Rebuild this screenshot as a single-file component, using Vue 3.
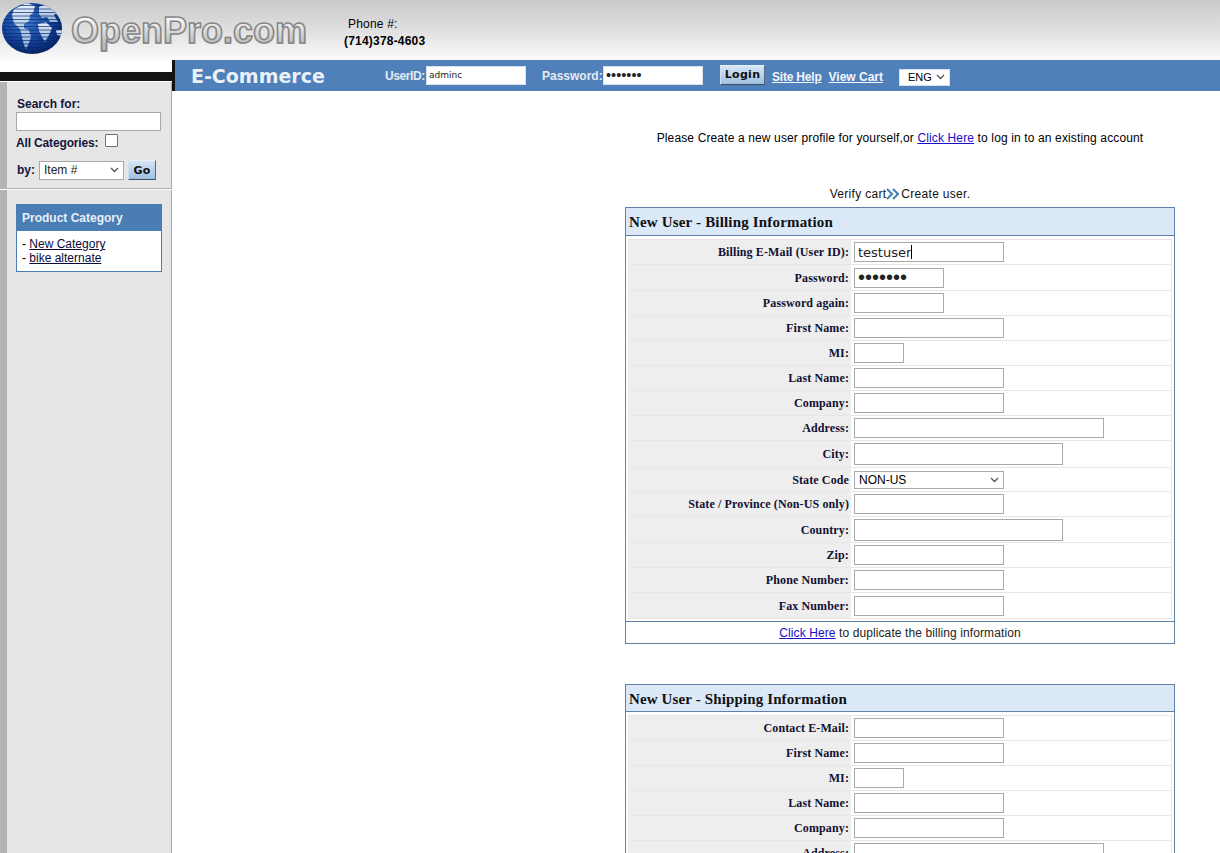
<script setup>
const billing = [
  { label: 'Billing E-Mail (User ID):', h: 25, w: 150, ih: 20, value: 'testuser', caret: true },
  { label: 'Password:', h: 26, w: 90, ih: 20, type: 'password', value: '1234567' },
  { label: 'Password again:', h: 25, w: 90, ih: 20, type: 'password' },
  { label: 'First Name:', h: 25, w: 150, ih: 20 },
  { label: 'MI:', h: 25, w: 50, ih: 20 },
  { label: 'Last Name:', h: 25, w: 150, ih: 20 },
  { label: 'Company:', h: 25, w: 150, ih: 20 },
  { label: 'Address:', h: 25, w: 250, ih: 20 },
  { label: 'City:', h: 27, w: 209, ih: 22 },
  { label: 'State Code', h: 24, select: true },
  { label: 'State / Province (Non-US only)', h: 25, w: 150, ih: 20 },
  { label: 'Country:', h: 26, w: 209, ih: 22 },
  { label: 'Zip:', h: 25, w: 150, ih: 20 },
  { label: 'Phone Number:', h: 25, w: 150, ih: 20 },
  { label: 'Fax Number:', h: 26, w: 150, ih: 20 }
]
const shipping = [
  { label: 'Contact E-Mail:', h: 25, w: 150, ih: 20 },
  { label: 'First Name:', h: 25, w: 150, ih: 20 },
  { label: 'MI:', h: 25, w: 50, ih: 20 },
  { label: 'Last Name:', h: 25, w: 150, ih: 20 },
  { label: 'Company:', h: 25, w: 150, ih: 20 },
  { label: 'Address:', h: 25, w: 250, ih: 20 }
]
const tables = [
  { title: 'New User - Billing Information', rows: billing, foot: true },
  { title: 'New User - Shipping Information', rows: shipping, foot: false }
]
</script>

<template>
  <div class="page">
    <header class="top">
      <div class="logo">
        <svg class="globe" width="66" height="58" viewBox="0 0 66 58">
          <defs>
            <radialGradient id="sea" cx="40%" cy="35%" r="70%">
              <stop offset="0" stop-color="#3f7fd0" />
              <stop offset="0.6" stop-color="#123f95" />
              <stop offset="1" stop-color="#071f5c" />
            </radialGradient>
            <linearGradient id="land" x1="0" y1="0" x2="0" y2="1">
              <stop offset="0" stop-color="#e8f1fa" />
              <stop offset="1" stop-color="#8fb2d8" />
            </linearGradient>
            <clipPath id="ball"><ellipse cx="32" cy="28.500" rx="30" ry="25.500" /></clipPath>
          </defs>
          <ellipse cx="32" cy="28.500" rx="30" ry="25.500" fill="url(#sea)" />
          <g clip-path="url(#ball)">
            <path fill="url(#land)" d="M14 9 L27 3 L35 6 L33 13 L30 15 L29 21 L24 24 L24 28 L29 30 L31 37 L29 43 L26 49 L24 45 L22 37 L20 29 L14 23 L12 15 Z" />
            <path fill="url(#land)" d="M39 7 L48 3 L59 11 L54 15 L58 22 L50 22 L47 17 L42 18 L39 14 Z" />
            <path fill="url(#land)" d="M38 24 L46 22 L52 28 L49 35 L45 42 L42 37 L39 31 Z" />
            <path fill="url(#land)" d="M56 30 L62 30 L62 36 L57 35 Z" />
            <path stroke="#0b2a70" stroke-width="1" opacity="0.7" d="M0 5.500H66M0 9H66M0 12.500H66M0 16H66M0 19.500H66M0 23H66M0 26.500H66M0 30H66M0 33.500H66M0 37H66M0 40.500H66M0 44H66M0 47.500H66M0 51H66" />
          </g>
        </svg>
        <span class="logo-text">OpenPro.com</span>
      </div>
      <div class="phone">
        <span class="phone-label">Phone #:</span>
        <strong>(714)378-4603</strong>
      </div>
    </header>

    <div class="shell">
      <aside class="side">
        <div class="blackbar"></div>
        <div class="search">
          <label class="search-title">Search for:</label>
          <input class="search-input" type="text" />
          <div class="cats">
            <span class="cats-label">All Categories:</span>
            <input class="check" type="checkbox" />
          </div>
          <div class="by">
            <span>by:</span>
            <select class="by-select chev"><option>Item #</option></select>
            <button class="btn go" type="button">Go</button>
          </div>
        </div>
        <div class="side-lower">
          <section class="catbox">
            <h3>Product Category</h3>
            <div class="catlist">
              <div>- <a href="#">New Category</a></div>
              <div>- <a href="#">bike alternate</a></div>
            </div>
          </section>
        </div>
      </aside>

      <div class="content">
        <nav class="nav">
          <span class="brand">E-Commerce</span>
          <label class="nav-label user">UserID:</label>
          <input class="nav-input" type="text" value="adminc" />
          <label class="nav-label pass">Password:</label>
          <input class="nav-input nav-secret" type="password" value="1234567" />
          <button class="btn login" type="button">Login</button>
          <a class="nav-link help" href="#">Site Help</a>
          <a class="nav-link cart" href="#">View Cart</a>
          <select class="lang chev"><option>ENG</option></select>
        </nav>

        <main class="main">
          <p class="intro">Please Create a new user profile for yourself,or <a href="#">Click Here</a> to log in to an existing account</p>
          <p class="steps">
            Verify cart<svg width="15" height="12" viewBox="0 0 15 12"><path d="M1 1l5 5-5 5M7 1l5 5-5 5" fill="none" stroke="#3d7fb0" stroke-width="2" /></svg>Create user.
          </p>

          <section v-for="t in tables" :key="t.title" class="panel">
            <h2 class="panel-title">{{ t.title }}</h2>
            <div class="rows">
              <div v-for="r in t.rows" :key="r.label" class="row" :style="{ height: r.h + 'px' }">
                <div class="label">{{ r.label }}</div>
                <div class="field">
                  <select v-if="r.select" class="state chev"><option>NON-US</option></select>
                  <span v-else class="wrap">
                    <input
                      class="text"
                      :class="{ secret: r.type === 'password' }"
                      :type="r.type || 'text'"
                      :value="r.value"
                      :style="{ width: r.w + 'px', height: r.ih + 'px' }"
                    />
                    <i v-if="r.caret" class="caret"></i>
                  </span>
                </div>
              </div>
            </div>
            <div v-if="t.foot" class="foot"><a href="#">Click Here</a> to duplicate the billing information</div>
          </section>
        </main>
      </div>
    </div>
  </div>
</template>

<style scoped>
.page {
  width: 1220px;
  height: 853px;
  overflow: hidden;
  background: #fff;
  font-family: "Liberation Sans", Arial, sans-serif;
  font-size: 12px;
  color: #000;
}
.top {
  height: 60px;
  display: flex;
  background: linear-gradient(#c9c9c9, #e2e2e2 55%, #fbfbfb);
}
.logo {
  width: 344px;
  display: flex;
  align-items: flex-start;
}
.globe { flex: none; }
.logo-text {
  margin: 8px 0 0 5px;
  font-size: 36px;
  font-weight: bold;
  line-height: 46px;
  background: linear-gradient(#f6f6f6 25%, #b8b8b8 80%);
  -webkit-background-clip: text;
  background-clip: text;
  -webkit-text-fill-color: transparent;
  -webkit-text-stroke: 1.500px #858585;
}
.phone {
  padding-top: 16px;
  display: flex;
  flex-direction: column;
  line-height: 17px;
  letter-spacing: 0.2px;
}
.phone-label { padding-left: 4px; }
.shell {
  display: flex;
  height: 793px;
}
.side {
  width: 172px;
  flex: none;
  padding-top: 12px;
  display: flex;
  flex-direction: column;
}
.blackbar {
  height: 9px;
  background: #141414;
  margin-bottom: 1px;
}
.search {
  height: 107px;
  box-sizing: border-box;
  padding: 15px 10px 0 9px;
  background: #e6e6e6;
  border-left: 7px solid #b4b4b4;
  border-right: 1px solid #aaa;
  border-bottom: 1px solid #b0b0b0;
  color: #15153f;
  font-weight: bold;
}
.search-title {
  display: block;
  margin-left: 1px;
  line-height: 14px;
}
.search-input {
  display: block;
  box-sizing: border-box;
  width: 145px;
  height: 19px;
  margin: 1px 0 0;
  border: 1px solid #a8a8a8;
  background: #fff;
  padding: 0;
}
.cats {
  display: flex;
  align-items: center;
  height: 16px;
  margin-top: 4px;
}
.cats-label { letter-spacing: -0.15px; }
.check {
  appearance: none;
  width: 13px;
  height: 13px;
  margin: -5px 0 0 7px;
  background: #fff;
  border: 1px solid #707070;
  border-radius: 1px;
  box-sizing: border-box;
}
.by {
  display: flex;
  align-items: center;
  margin: 9px 0 0 1px;
}
.chev {
  appearance: none;
  background: #fff url("data:image/svg+xml,%3Csvg xmlns='http://www.w3.org/2000/svg' width='9' height='6'%3E%3Cpath d='M1 1l3.500 3.500L8 1' fill='none' stroke='%23555' stroke-width='1.300'/%3E%3C/svg%3E") no-repeat right 4px center;
  border-radius: 0;
}
.by-select {
  box-sizing: border-box;
  width: 85px;
  height: 19px;
  margin-left: 4px;
  padding-left: 4px;
  border: 1px solid #a8a8a8;
  font: 12px "Liberation Sans", Arial, sans-serif;
  color: #222;
}
.btn {
  box-sizing: border-box;
  padding: 0;
  font: bold 11px "DejaVu Sans", Verdana, sans-serif;
  letter-spacing: 0.3px;
  color: #111;
  background: linear-gradient(#d6e6f6, #9fc0e2);
  border: 1px solid;
  border-color: #e8f0f8 #55687c #3e4f60 #cfdfee;
}
.go {
  width: 28px;
  height: 20px;
  margin-left: 4px;
}
.side-lower {
  flex: 1;
  padding: 14px 9px 0 9px;
  background: #e6e6e6;
  border-left: 7px solid #b4b4b4;
  border-right: 1px solid #aaa;
  margin-top: 1px;
}
.catbox {
  width: 146px;
  box-sizing: border-box;
  border: 1px solid #4a7db3;
  background: #fff;
}
.catbox h3 {
  margin: 0;
  height: 26px;
  padding-left: 5px;
  background: #4a7db3;
  color: #e8eff7;
  font-size: 12px;
  line-height: 27px;
}
.catlist {
  padding: 6px 5px 6px;
  line-height: 14px;
}
.catlist a { color: #0a0a3c; }
.content {
  flex: 1;
  min-width: 0;
}
.nav {
  height: 31px;
  display: flex;
  align-items: center;
  background: #4f80b9;
  border-left: 3px solid #141414;
  color: #e3ebf4;
  font-weight: bold;
}
.brand {
  width: 194px;
  padding-left: 16px;
  box-sizing: border-box;
  font: bold 19px "DejaVu Sans", Verdana, sans-serif;
  color: #e9f0f8;
}
.nav-label { line-height: 16px; }
.user {
  margin-left: 16px;
  width: 40px;
  letter-spacing: -0.4px;
}
.pass { margin-left: 16px; width: 60px; }
.nav-input {
  box-sizing: border-box;
  width: 100px;
  height: 19px;
  margin: 0 0 1px 1px;
  padding: 0 2px;
  border: 1px solid #d8e2ee;
  background: #fff;
  font: 9px "DejaVu Sans", Verdana, sans-serif;
  color: #222;
}
.nav-secret { font: 14.500px "Liberation Sans", Arial, sans-serif; }
.login {
  width: 45px;
  height: 20px;
  margin: 0 0 2px 17px;
}
.nav-link {
  color: #f2f6fb;
  margin-top: 2px;
}
.help {
  margin-left: 7px;
  letter-spacing: -0.2px;
}
.cart { margin-left: 7px; }
.lang {
  box-sizing: border-box;
  width: 51px;
  height: 17px;
  margin: 3px 0 0 16px;
  padding-left: 8px;
  border: 1px solid #d8e2ee;
  font: 11px "Liberation Sans", Arial, sans-serif;
}
.main {
  width: 550px;
  margin-left: 453px;
}
.intro {
  margin: 0;
  padding-top: 40px;
  text-align: center;
  line-height: 14px;
  letter-spacing: 0.135px;
}
.intro a, .foot a { color: #1a0dc8; }
.steps {
  margin: 0;
  padding-top: 42px;
  height: 14px;
  line-height: 14px;
  display: flex;
  justify-content: center;
  align-items: center;
  color: #111;
  letter-spacing: 0.3px;
}
.panel {
  margin-top: 6px;
  margin-bottom: 40px;
  border: 1px solid #5e80a6;
  background: #fff;
}
.panel-title {
  margin: 0;
  height: 27px;
  padding-left: 3px;
  background: #dbe8f8;
  border-bottom: 1px solid #5e80a6;
  font: bold 15px/28px "Liberation Serif", "Times New Roman", serif;
  letter-spacing: 0.17px;
  color: #111;
}
.panel + .panel .panel-title { height: 26px; letter-spacing: 0.13px; }
.rows {
  margin: 3px 2px 2px;
  border-top: 1px solid #e8e8e8;
  border-right: 1px solid #e8e8e8;
}
.row {
  display: flex;
  box-sizing: border-box;
  border-bottom: 1px solid #e6e6e6;
}
.label {
  width: 223px;
  padding-right: 2px;
  box-sizing: border-box;
  display: flex;
  align-items: center;
  justify-content: flex-end;
  background: #eeeeee;
  font: bold 12px/14px "Liberation Serif", "Times New Roman", serif;
  letter-spacing: 0.12px;
  color: #111133;
}
.field {
  flex: 1;
  display: flex;
  align-items: center;
  padding-left: 3px;
}
.wrap {
  position: relative;
  display: block;
  line-height: 0;
}
.text {
  box-sizing: border-box;
  padding: 0 3px;
  border: 1px solid #a9a9a9;
  background: #fff;
  font: 13px "DejaVu Sans", Verdana, sans-serif;
  color: #222;
}
.secret { font: 20px "Liberation Sans", Arial, sans-serif; }
.caret {
  position: absolute;
  left: 57px;
  top: 3px;
  width: 1px;
  height: 14px;
  background: #000;
}
.state {
  box-sizing: border-box;
  width: 150px;
  height: 18px;
  padding-left: 4px;
  border: 1px solid #a9a9a9;
  font: 12px "Liberation Sans", Arial, sans-serif;
}
.foot {
  height: 21px;
  border-top: 1px solid #5e80a6;
  text-align: center;
  line-height: 22px;
  letter-spacing: 0.1px;
  color: #222;
}
</style>

<style>
html, body { margin: 0; overflow: hidden; }
</style>
